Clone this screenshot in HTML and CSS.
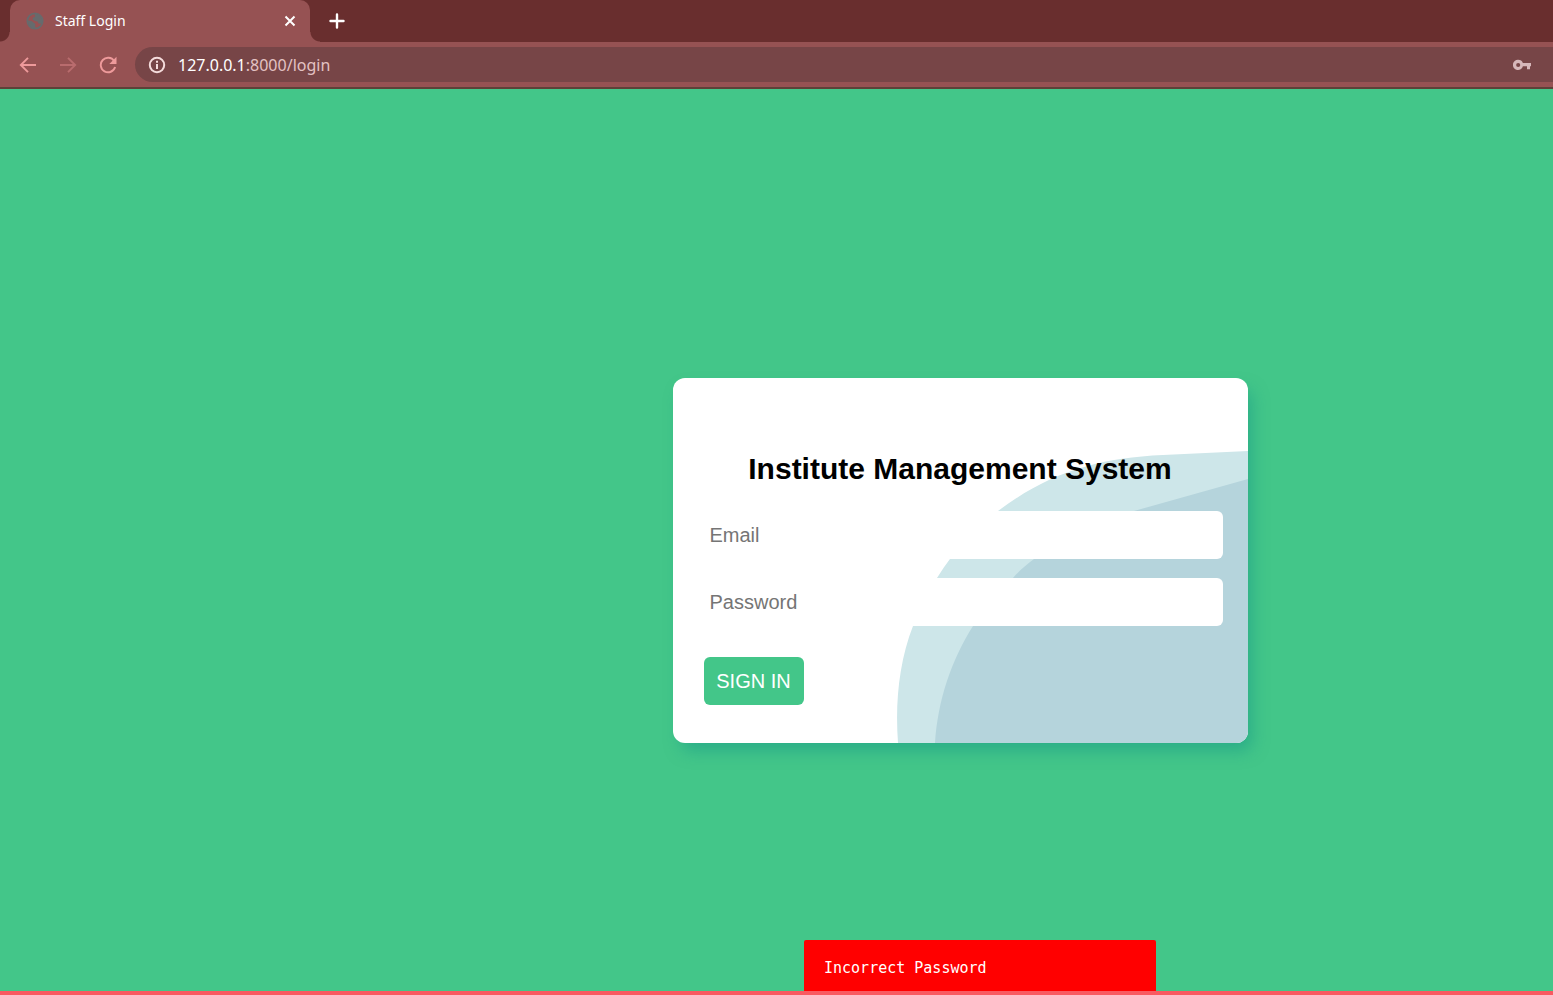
FILE: index.html
```html
<!DOCTYPE html>
<html lang="en">
<head>
<meta charset="utf-8">
<title>Staff Login</title>
<link rel="stylesheet" href="styles.css">
</head>
<body>
<header class="browser">
  <div class="tabs">
    <div class="tab">
      <svg class="favicon" viewBox="0 0 18 18" aria-hidden="true"><circle cx="9" cy="9" r="7.700" fill="none" stroke="#666b6d" stroke-width="1.700"/><path d="M8.500 1.500L12 2.500l2.500 2L16.500 9l-1 3-3-.5-1-2-2.500-.5L6.500 7.500 7 5.500l2-.5zM1.500 8.500l4 .5 2.500 2 1.500 1-.5 2 1 2.500-4-.5-3-3z" fill="#666b6d"/></svg>
      <span class="tab-title">Staff Login</span>
      <button class="icon-button tab-close" aria-label="Close tab"><svg width="12" height="12" viewBox="0 0 12 12"><path d="M1.500 1.500l9 9M10.500 1.500l-9 9" stroke="#fff" stroke-width="2"/></svg></button>
    </div>
    <button class="icon-button new-tab" aria-label="New tab"><svg width="16" height="16" viewBox="0 0 16 16"><path d="M8 1.500v13M1.500 8h13" stroke="#fff" stroke-width="2.400" stroke-linecap="round"/></svg></button>
  </div>
  <div class="toolbar">
    <nav class="history" aria-label="History">
      <button class="icon-button" aria-label="Back"><svg width="18" height="18" viewBox="0 0 18 18"><path d="M17 9H2M9 1.800L1.800 9 9 16.200" fill="none" stroke="#ee9a9b" stroke-width="1.900"/></svg></button>
      <button class="icon-button" aria-label="Forward"><svg width="18" height="18" viewBox="0 0 18 18"><path d="M1 9h15M9 1.800L16.200 9 9 16.200" fill="none" stroke="#b96c6e" stroke-width="1.900"/></svg></button>
      <button class="icon-button" aria-label="Reload"><svg width="18" height="18" viewBox="0 0 18 18"><path d="M15.200 5A7.300 7.300 0 1 0 16.100 11" fill="none" stroke="#ee9a9b" stroke-width="1.900"/><path d="M17.500 0.800V8h-7.200z" fill="#ee9a9b"/></svg></button>
    </nav>
    <div class="omnibox">
      <svg width="18" height="18" viewBox="0 0 18 18" aria-hidden="true"><circle cx="9" cy="9" r="7.200" fill="none" stroke="#f5dcdc" stroke-width="2"/><path d="M9 8v5M9 4.800v1.900" stroke="#f5dcdc" stroke-width="2"/></svg>
      <span class="url"><span class="url-host">127.0.0.1</span>:8000/login</span>
      <svg width="18" height="12" viewBox="0 0 18 12" aria-hidden="true"><path fill-rule="evenodd" d="M5.200.8a5.100 5.100 0 0 1 4.700 3.200H18v3.200h-1v3h-3v-3H9.900A5.100 5.100 0 1 1 5.200.8zm0 3.100a2 2 0 1 0 0 4.100 2 2 0 0 0 0-4.100z" fill="#d6b7ba"/></svg>
    </div>
  </div>
</header>
<main class="page">
  <form class="card">
    <svg class="card-art" viewBox="0 0 575 365" preserveAspectRatio="none" aria-hidden="true">
      <path d="M575 73L490 77C425 80 377 94 325 133C302 151 282 171 264 200C253 217 246 231 240 248C226 284 222 325 225 365H575z" fill="#cde6e9"/>
      <path d="M575 101L461 133C425 144 390 157 361 181C353 187 347 192 340 200C325 214 312 229 300 248C278 283 265 322 262 365H575z" fill="#b5d4dc"/>
    </svg>
    <h1 class="card-title">Institute Management System</h1>
    <div class="fields">
      <input class="field" type="email" placeholder="Email" aria-label="Email">
      <input class="field" type="password" placeholder="Password" aria-label="Password">
      <button class="submit" type="button">SIGN IN</button>
    </div>
  </form>
  <div class="toast" role="alert">Incorrect Password</div>
</main>
</body>
</html>
```
FILE: styles.css
```css
* {
  box-sizing: border-box;
}

body {
  margin: 0;
  min-height: 100vh;
  display: flex;
  flex-direction: column;
  background: #43c689;
  font-family: "Liberation Sans", Arial, sans-serif;
}

.browser {
  background: #965253;
  border-bottom: 2px solid #5c4238;
  font-family: "Noto Sans", "Open Sans", sans-serif;
}

.tabs {
  display: flex;
  align-items: center;
  height: 42px;
  padding-left: 10px;
  background: #692e2e;
}

.tab {
  position: relative;
  display: flex;
  align-items: center;
  gap: 11px;
  width: 300px;
  height: 42px;
  padding: 0 14px 0 16px;
  border-radius: 10px 10px 0 0;
  background: #965253;
}

.tab::before,
.tab::after {
  content: "";
  position: absolute;
  bottom: 0;
  width: 10px;
  height: 10px;
}

.tab::before {
  right: 100%;
  background: radial-gradient(circle at 0 0, #692e2e 9px, #965253 10px);
}

.tab::after {
  left: 100%;
  background: radial-gradient(circle at 100% 0, #692e2e 9px, #965253 10px);
}

.favicon {
  width: 18px;
  height: 18px;
}

.tab-title {
  flex: 1;
  color: #fff;
  font-size: 14px;
  line-height: 20px;
}

.icon-button {
  display: flex;
  padding: 0;
  border: 0;
  background: none;
}

.new-tab {
  margin-left: 19px;
}

.toolbar {
  display: flex;
  align-items: center;
  height: 45px;
  padding-left: 19px;
}

.history {
  display: flex;
  gap: 22px;
  margin-right: 18px;
}

.omnibox {
  flex: 1;
  display: flex;
  align-items: center;
  gap: 12px;
  height: 35px;
  padding: 0 22px 0 13px;
  border-radius: 18px 0 0 18px;
  background: #774547;
}

.url {
  flex: 1;
  color: #e3c2c3;
  font-size: 16px;
}

.url-host {
  color: #fff;
}

.page {
  flex: 1;
  display: flex;
  flex-direction: column;
  align-items: center;
  padding: 289px 0 0 367px;
  border-bottom: 4px solid #f95a61;
}

.card {
  position: relative;
  width: 100%;
  max-width: 575px;
  padding: 73px 0 38px;
  border-radius: 12px;
  background: #fff;
  box-shadow: 6px 10px 16px -2px rgba(20, 150, 135, 0.5);
}

.card-art {
  position: absolute;
  inset: 0;
  width: 100%;
  height: 100%;
  border-radius: 12px;
}

.card-title {
  position: relative;
  margin: 0 0 24px;
  font-size: 30px;
  line-height: 36px;
  text-align: center;
}

.fields {
  position: relative;
  display: flex;
  flex-direction: column;
  align-items: flex-start;
  gap: 19px;
  padding: 0 25px 0 31px;
}

.field {
  width: 100%;
  height: 48px;
  padding: 0 6px;
  border: 0;
  border-radius: 6px;
  background: #fff;
  color: #222;
  font-family: inherit;
  font-size: 20px;
}

.field::placeholder {
  color: #757575;
}

.submit {
  width: 100px;
  height: 48px;
  margin-top: 12px;
  padding: 0;
  border: 0;
  border-radius: 6px;
  background: #43c689;
  color: #fff;
  font-family: inherit;
  font-size: 20px;
}

.toast {
  width: 352px;
  margin: auto 0 0 40px;
  padding: 18px 20px 13px;
  border-radius: 2px 2px 0 0;
  background: #f00;
  color: #fff;
  font-family: "DejaVu Sans Mono", monospace;
  font-size: 15px;
  line-height: 20px;
}
```
